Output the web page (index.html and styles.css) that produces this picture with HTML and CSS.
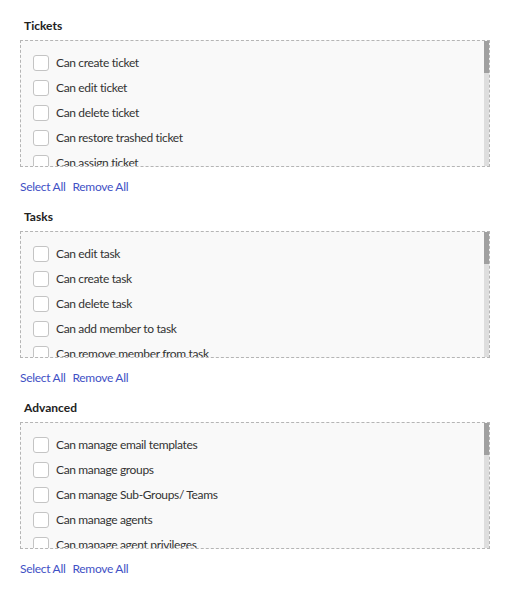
FILE: index.html
```html
<!DOCTYPE html>
<html>
<head>
<meta charset="utf-8">
<link rel="stylesheet" href="styles.css">
</head>
<body>
<div class="page">
  <section class="group">
    <h3 class="group-title">Tickets</h3>
    <div class="perm-box">
      <div class="perm-list">
        <label class="perm"><span class="cb"></span>Can create ticket</label>
        <label class="perm"><span class="cb"></span>Can edit ticket</label>
        <label class="perm"><span class="cb"></span>Can delete ticket</label>
        <label class="perm"><span class="cb"></span>Can restore trashed ticket</label>
        <label class="perm"><span class="cb"></span>Can assign ticket</label>
      </div>
      <div class="scrollbar"><div class="scrollbar-thumb"></div></div>
    </div>
    <div class="actions"><a class="link">Select All</a><a class="link">Remove All</a></div>
  </section>

  <section class="group">
    <h3 class="group-title">Tasks</h3>
    <div class="perm-box">
      <div class="perm-list">
        <label class="perm"><span class="cb"></span>Can edit task</label>
        <label class="perm"><span class="cb"></span>Can create task</label>
        <label class="perm"><span class="cb"></span>Can delete task</label>
        <label class="perm"><span class="cb"></span>Can add member to task</label>
        <label class="perm"><span class="cb"></span>Can remove member from task</label>
      </div>
      <div class="scrollbar"><div class="scrollbar-thumb"></div></div>
    </div>
    <div class="actions"><a class="link">Select All</a><a class="link">Remove All</a></div>
  </section>

  <section class="group">
    <h3 class="group-title">Advanced</h3>
    <div class="perm-box">
      <div class="perm-list">
        <label class="perm"><span class="cb"></span>Can manage email templates</label>
        <label class="perm"><span class="cb"></span>Can manage groups</label>
        <label class="perm"><span class="cb"></span>Can manage Sub-Groups/ Teams</label>
        <label class="perm"><span class="cb"></span>Can manage agents</label>
        <label class="perm"><span class="cb"></span>Can manage agent privileges</label>
      </div>
      <div class="scrollbar"><div class="scrollbar-thumb"></div></div>
    </div>
    <div class="actions"><a class="link">Select All</a><a class="link">Remove All</a></div>
  </section>
</div>
</body>
</html>
```

FILE: styles.css
```css
html, body {
  margin: 0;
  padding: 0;
  background: #ffffff;
}

body {
  font-family: "Lato", "Liberation Sans", sans-serif;
  font-size: 12px;
  color: #333333;
}

.page {
  padding: 18px 20px 0 20px;
  display: flex;
  flex-direction: column;
  gap: 14px;
}

.group {
  display: flex;
  flex-direction: column;
}

.group-title {
  margin: 0 0 6px 0;
  padding-left: 4px;
  font-size: 12px;
  line-height: 16px;
  font-weight: 700;
  color: #222222;
}

.perm-box {
  position: relative;
  width: 470px;
  height: 127px;
  box-sizing: border-box;
  border: 1px dashed #b5b5b5;
  background: #f9f9f9;
  overflow: hidden;
}

.perm-list {
  display: flex;
  flex-direction: column;
  padding: 9px 0 0 12px;
}

.perm {
  display: flex;
  align-items: center;
  gap: 7px;
  height: 25px;
  color: #333333;
  letter-spacing: -0.35px;
  white-space: nowrap;
}

.cb {
  width: 14px;
  height: 14px;
  border: 1px solid #c4c4c4;
  border-radius: 3px;
  background: #ffffff;
  flex: none;
}

.scrollbar {
  position: absolute;
  top: 0;
  right: 0;
  bottom: 0;
  width: 5px;
  background: #dedede;
}

.scrollbar-thumb {
  height: 32px;
  background: #a0a0a0;
}

.actions {
  margin-top: 12px;
  display: flex;
  gap: 7px;
  line-height: 16px;
  letter-spacing: -0.3px;
}

.link {
  color: #3f51c5;
  cursor: pointer;
}
```
